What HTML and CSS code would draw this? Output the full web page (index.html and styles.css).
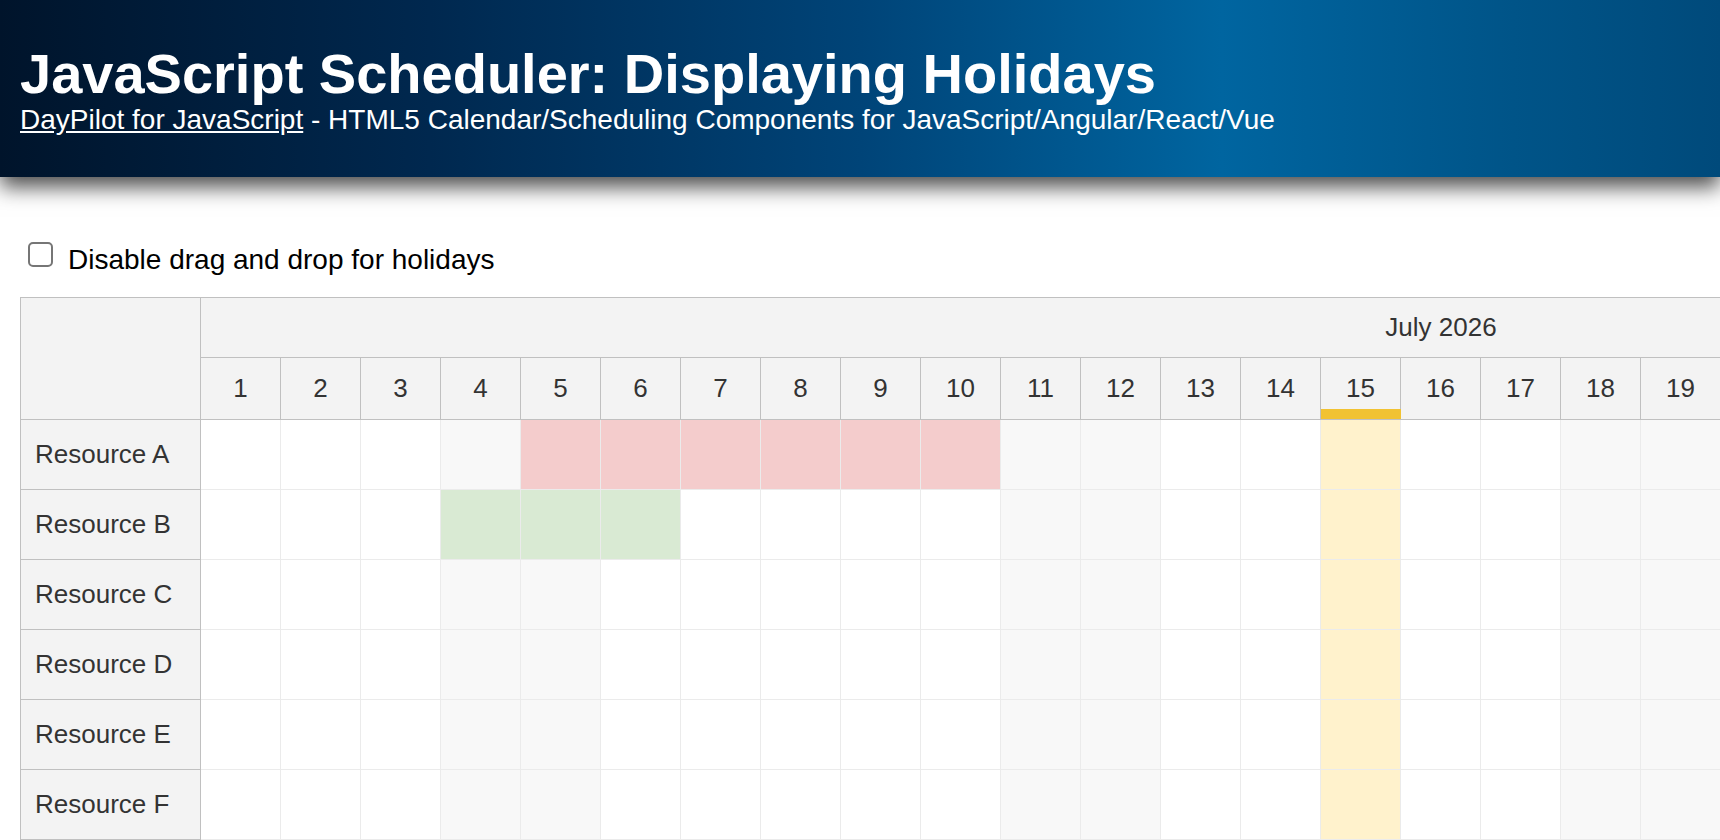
FILE: index.html
```html
<!DOCTYPE html>
<html lang="en">
<head>
    <meta charset="UTF-8">
    <meta name="viewport" content="width=device-width, initial-scale=1.0">
    <title>JavaScript Scheduler: Displaying Holidays</title>
    <link rel="stylesheet" href="styles.css">
</head>
<body>
    <header class="page-header">
        <h1>JavaScript Scheduler: Displaying Holidays</h1>
        <div class="subtitle"><a href="#">DayPilot for JavaScript</a> - HTML5 Calendar/Scheduling Components for JavaScript/Angular/React/Vue</div>
    </header>

    <main class="main">
        <div class="toolbar">
            <label><input type="checkbox" id="disableDrag">Disable drag and drop for holidays</label>
        </div>

        <div class="scheduler-wrap">
            <div class="scheduler" id="scheduler"></div>
        </div>
    </main>

    <script>
        const resources = ['Resource A', 'Resource B', 'Resource C', 'Resource D', 'Resource E', 'Resource F'];

        // holidays per resource (day numbers in July 2026)
        const holidays = [
            { row: 0, start: 5, end: 10, cls: 'holiday-red' },
            { row: 1, start: 4, end: 6, cls: 'holiday-green' }
        ];
        // global holiday, all rows
        const globalHoliday = 15;

        const year = 2026;
        const month = 6; // July
        const daysInMonth = 31;

        function isWeekend(day) {
            const dow = new Date(year, month, day).getDay();
            return dow === 0 || dow === 6;
        }

        function holidayFor(row, day) {
            for (const h of holidays) {
                if (h.row === row && day >= h.start && day <= h.end) {
                    return h.cls;
                }
            }
            return null;
        }

        let html = '<div class="corner"></div>';
        html += '<div class="month-header"><span>July 2026</span></div>';

        for (let d = 1; d <= daysInMonth; d++) {
            const today = d === globalHoliday ? ' day-header-holiday' : '';
            html += '<div class="day-header' + today + '">' + d + '</div>';
        }

        resources.forEach(function(name, row) {
            html += '<div class="row-header">' + name + '</div>';
            for (let d = 1; d <= daysInMonth; d++) {
                let cls = 'cell';
                const h = holidayFor(row, d);
                if (h) {
                    cls += ' ' + h;
                } else if (d === globalHoliday) {
                    cls += ' holiday-yellow';
                } else if (isWeekend(d)) {
                    cls += ' cell-weekend';
                }
                html += '<div class="' + cls + '"></div>';
            }
        });

        document.getElementById('scheduler').innerHTML = html;
    </script>
</body>
</html>
```

FILE: styles.css
```css
* {
    box-sizing: border-box;
}
html, body {
    overflow: hidden;
}
body {
    margin: 0;
    font-family: "Liberation Sans", Arial, sans-serif;
    background: #fff;
    color: #000;
}
.page-header {
    position: relative;
    z-index: 1;
    height: 177px;
    padding: 43px 20px 0;
    background: linear-gradient(90deg, #00142b 0%, #00284f 25%, #004478 50%, #0065a0 71%, #005488 88%, #004a7b 100%);
    box-shadow: 0 10px 20px rgba(0, 0, 0, 0.7);
    color: #fff;
}
.page-header h1 {
    margin: 0;
    font-size: 56px;
    font-weight: bold;
    line-height: 62px;
}
.subtitle {
    font-size: 28px;
    line-height: 29px;
}
.subtitle a {
    color: #fff;
}
.main {
    padding: 0 0 0 20px;
}
.toolbar {
    margin: 69px 0 23px;
    height: 28px;
    font-size: 28px;
    line-height: 28px;
}
.toolbar label {
    display: flex;
    align-items: flex-start;
}
.toolbar input[type="checkbox"] {
    appearance: none;
    -webkit-appearance: none;
    width: 25px;
    height: 25px;
    margin: -4px 15px 0 8px;
    border: 2px solid #767676;
    border-radius: 5px;
    background: #fff;
    flex-shrink: 0;
}
.scheduler-wrap {
    overflow: hidden;
}
.scheduler {
    display: grid;
    grid-template-columns: 180px repeat(31, 80px);
    grid-template-rows: 60px 62px repeat(6, 70px);
    width: max-content;
    border-top: 1px solid #c0c0c0;
    border-left: 1px solid #c0c0c0;
    font-size: 26px;
    color: #333;
}
.corner {
    grid-row: 1 / 3;
    background: #f3f3f3;
    border-right: 1px solid #c0c0c0;
    border-bottom: 1px solid #c0c0c0;
}
.month-header {
    grid-column: 2 / span 31;
    display: flex;
    align-items: center;
    justify-content: center;
    background: #f3f3f3;
    border-bottom: 1px solid #c0c0c0;
}
.day-header {
    position: relative;
    display: flex;
    align-items: center;
    justify-content: center;
    background: #f3f3f3;
    border-right: 1px solid #c0c0c0;
    border-bottom: 1px solid #c0c0c0;
}
.day-header-holiday::after {
    content: "";
    position: absolute;
    left: 0;
    right: -1px;
    bottom: 0;
    height: 10px;
    background: #f1c232;
}
.row-header {
    display: flex;
    align-items: center;
    padding-left: 14px;
    background: #f3f3f3;
    border-right: 1px solid #c0c0c0;
    border-bottom: 1px solid #c0c0c0;
}
.cell {
    background: #fff;
    border-right: 1px solid #ebebeb;
    border-bottom: 1px solid #ebebeb;
}
.cell-weekend {
    background: #f8f8f8;
}
.holiday-red {
    background: #f4cccc;
}
.holiday-green {
    background: #d9ead3;
}
.holiday-yellow {
    background: #fff2cc;
}
```
